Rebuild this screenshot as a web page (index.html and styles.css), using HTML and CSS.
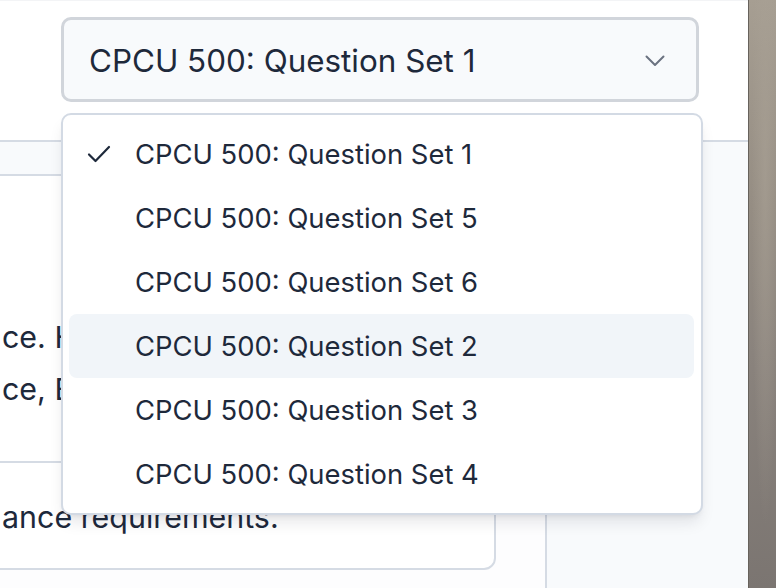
FILE: index.html
```html
<!DOCTYPE html>
<html lang="en">
<head>
<meta charset="utf-8">
<title>Question Set Picker</title>
<link rel="stylesheet" href="styles.css">
</head>
<body>
<div class="screen">
  <div class="app">
    <header class="topbar">
      <div class="picker">
        <button class="select" type="button">
          <span class="select-label">CPCU 500: Question Set 1</span>
          <svg class="chevron" width="20" height="12" viewBox="0 0 20 12" aria-hidden="true">
            <path d="M1.5 1.5 L10 10 L18.5 1.5" fill="none" stroke="currentColor" stroke-width="2" stroke-linecap="round" stroke-linejoin="round"/>
          </svg>
        </button>
        <ul class="menu">
          <li class="option">
            <span class="check">
              <svg width="24" height="18" viewBox="0 0 24 18" aria-hidden="true">
                <path d="M2 9.5 L8.5 16 L22 2" fill="none" stroke="currentColor" stroke-width="2.2" stroke-linecap="round" stroke-linejoin="round"/>
              </svg>
            </span>
            <span>CPCU 500: Question Set 1</span>
          </li>
          <li class="option"><span class="check"></span><span>CPCU 500: Question Set 5</span></li>
          <li class="option"><span class="check"></span><span>CPCU 500: Question Set 6</span></li>
          <li class="option option-hover"><span class="check"></span><span>CPCU 500: Question Set 2</span></li>
          <li class="option"><span class="check"></span><span>CPCU 500: Question Set 3</span></li>
          <li class="option"><span class="check"></span><span>CPCU 500: Question Set 4</span></li>
        </ul>
      </div>
    </header>
    <div class="body">
      <main class="content">
        <div class="strip"></div>
        <div class="cards">
          <section class="card card-first">
            <p class="card-text">
              <span class="line">ce. How</span>
              <span class="line">ce, Both</span>
            </p>
          </section>
          <section class="card card-last">
            <p class="card-text">
              <span class="line">ance requirements.</span>
            </p>
          </section>
        </div>
      </main>
      <aside class="sidebar"></aside>
    </div>
  </div>
  <div class="wallpaper"></div>
</div>
</body>
</html>
```

FILE: styles.css
```css
* {
  box-sizing: border-box;
}

html, body {
  margin: 0;
  padding: 0;
}

body {
  font-family: Inter, "Noto Sans", "Liberation Sans", sans-serif;
  color: #1e293b;
  background: #ffffff;
}

.screen {
  display: flex;
  width: 776px;
  height: 588px;
  overflow: hidden;
}

.app {
  width: 748px;
  display: flex;
  flex-direction: column;
  background: #ffffff;
}

.topbar {
  height: 142px;
  flex: none;
  padding: 17px 0 0 61px;
  border-top: 1px solid #f3f4f6;
  border-bottom: 2px solid #d5dbe4;
  background: #ffffff;
  position: relative;
  z-index: 2;
}

.picker {
  position: relative;
  width: 638px;
  margin-top: -1px;
}

.select {
  display: flex;
  align-items: center;
  justify-content: space-between;
  width: 638px;
  height: 85px;
  padding: 3px 31px 0 25px;
  border: 3px solid #d1d5db;
  border-radius: 10px;
  background: #f8fafc;
  font-family: inherit;
  font-size: 31.4px;
  color: #1e293b;
  text-align: left;
  cursor: pointer;
}

.select-label {
  white-space: nowrap;
}

.chevron {
  color: #6b7280;
  flex: none;
}

.menu {
  position: absolute;
  top: calc(100% + 11px);
  left: 0;
  width: 642px;
  margin: 0;
  padding: 7px 7px 7px 6px;
  list-style: none;
  background: #ffffff;
  border: 2px solid #d3dae4;
  border-radius: 10px;
  box-shadow: 0 10px 15px -3px rgba(15, 23, 42, 0.1), 0 4px 6px -4px rgba(15, 23, 42, 0.1);
}

.option {
  display: flex;
  align-items: center;
  height: 64px;
  padding-left: 19px;
  border-radius: 8px;
  font-size: 27.4px;
  color: #1e293b;
  white-space: nowrap;
}

.option-hover {
  background: #f1f5f9;
}

.check {
  width: 47px;
  flex: none;
  display: flex;
  align-items: center;
  color: #1e293b;
}

.check svg {
  display: block;
  margin-left: -1px;
}

.body {
  flex: 1;
  display: flex;
  min-height: 0;
}

.content {
  width: 545px;
  flex: none;
  display: flex;
  flex-direction: column;
  background: #fdfdfe;
}

.strip {
  height: 32px;
  flex: none;
  background: #f8fafc;
}

.cards {
  width: 520px;
  margin-left: -24px;
  border: 2px solid #d5dbe4;
  border-radius: 12px;
  background: #ffffff;
  overflow: hidden;
}

.card {
  padding-left: 24px;
}

.card-first {
  padding-top: 135px;
  padding-bottom: 46px;
  border-bottom: 2px solid #d5dbe4;
}

.card-last {
  padding-top: 28px;
  padding-bottom: 25px;
}

.card-text {
  margin: 0;
  font-size: 30.4px;
  line-height: 52px;
  color: #1e293b;
}

.line {
  display: block;
  white-space: nowrap;
}

.sidebar {
  flex: 1;
  background: #f8fafc;
  border-left: 2px solid #d5dbe4;
}

.wallpaper {
  width: 28px;
  flex: none;
  border-left: 1px solid #67625c;
  background:
    radial-gradient(ellipse at 60% 30%, rgba(170, 162, 150, 0.6), rgba(170, 162, 150, 0) 60%),
    linear-gradient(180deg, #a69e92 0%, #958d83 35%, #8a837d 60%, #7b7571 100%);
}
```
